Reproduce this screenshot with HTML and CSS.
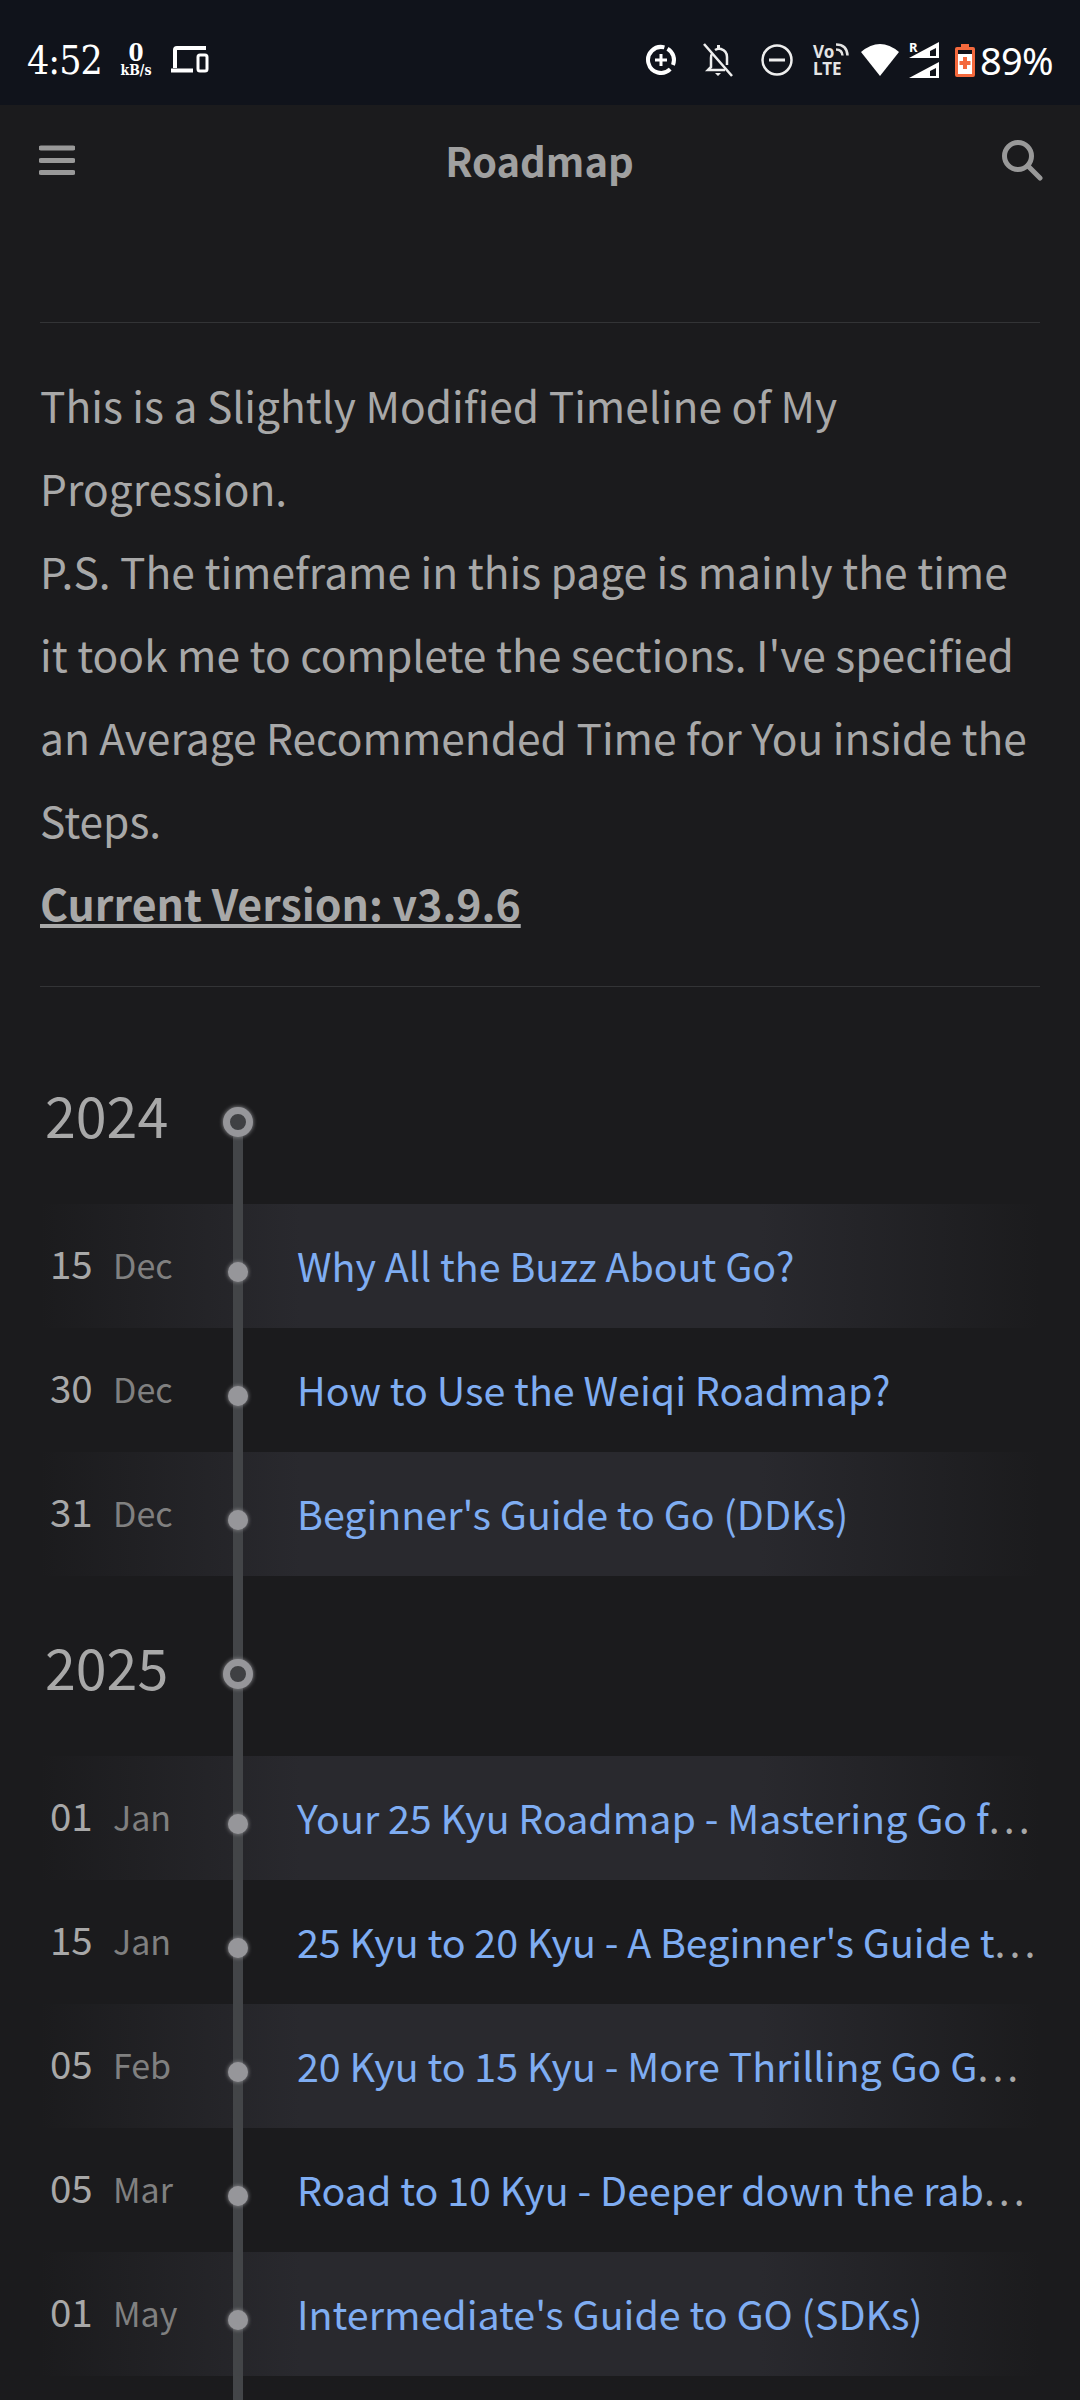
FILE: index.html
```html
<!DOCTYPE html>
<html lang="en">
<head>
  <meta charset="UTF-8">
  <title>Roadmap</title>
  <link rel="stylesheet" href="styles.css">
</head>
<body>

  <div class="status-bar">
    <div class="status-left">
      <span class="clock">4:52</span>
      <span class="speed"><b>0</b><small>kB/s</small></span>
      <svg class="ic-devices" width="38" height="30" viewBox="0 0 38 30">
        <path d="M4 23V5q0-2 2-2h29M0 25.500h22" fill="none" stroke="#fff" stroke-width="4"/>
        <rect x="27" y="10" width="9" height="16" rx="2" fill="none" stroke="#fff" stroke-width="3"/>
      </svg>
    </div>
    <div class="status-right">
      <svg width="32" height="32" viewBox="0 0 32 32">
        <path d="M19.400 3.400A13 13 0 1 0 25.200 25.200" fill="none" stroke="#fff" stroke-width="4"/>
        <path d="M22.500 4.700A13 13 0 0 1 28 20.900" fill="none" stroke="#fff" stroke-width="4"/>
        <path d="M16 10v12M10 16h12" stroke="#fff" stroke-width="3"/>
      </svg>
      <svg class="ic-bell" width="32" height="34" viewBox="0 0 32 34">
        <path d="M10 11q-1 1-1 4v9l-3 3h17M13 7q3-2 6-1 6 2 6 8v8" fill="none" stroke="#eee" stroke-width="2.500"/>
        <path d="M13 30h6l-3 3zM15 2h3v3h-3z" fill="#eee"/>
        <path d="M2 1l28 32" stroke="#eee" stroke-width="2.500"/>
      </svg>
      <svg class="ic-dnd" width="32" height="32" viewBox="0 0 32 32">
        <circle cx="16" cy="16" r="14.500" fill="none" stroke="#eee" stroke-width="2.500"/>
        <path d="M8 16h16" stroke="#eee" stroke-width="3"/>
      </svg>
      <span class="volte">
        <span class="volte-top">Vo
          <svg width="14" height="13" viewBox="0 0 14 13">
            <path d="M1 1.500Q12 1.500 12.500 12.500M1 6.500Q7 6.500 7.500 12.500" fill="none" stroke="#e4e4e4" stroke-width="2.500"/>
          </svg>
        </span>
        <span>LTE</span>
      </span>
      <svg class="ic-wifi" width="38" height="32" viewBox="0 0 38 32">
        <path d="M0 8Q19-8 38 8L19 32z" fill="#fff"/>
      </svg>
      <span class="signal">
        <i class="signal-r">R</i>
        <svg width="30" height="36" viewBox="0 0 30 36">
          <path d="M0 16L30 0v16zM0 36l30-16v16z" fill="#fff"/>
          <path d="M21 9l6-3v8h-6zM21 29l6-3v8h-6z" fill="#10131b"/>
        </svg>
      </span>
      <svg class="ic-battery" width="20" height="33" viewBox="0 0 20 33">
        <path d="M6 0h8v3h4q2 0 2 2v26q0 2-2 2H2q-2 0-2-2V5q0-2 2-2h4z" fill="#f4693d"/>
        <rect x="3" y="7" width="14" height="23" fill="#fff"/>
        <rect x="3" y="6" width="14" height="4" fill="#10131b"/>
        <path d="M10 13v12M4.500 19h11" stroke="#f4693d" stroke-width="4"/>
      </svg>
      <span class="percent">89%</span>
    </div>
  </div>

  <header class="app-bar">
    <svg width="36" height="30" viewBox="0 0 36 30">
      <path d="M2 3h32M2 15.500h32M2 27.500h32" stroke="#999" stroke-width="5" stroke-linecap="round"/>
    </svg>
    <h1>Roadmap</h1>
    <svg width="42" height="42" viewBox="0 0 42 42">
      <circle cx="17" cy="17" r="13.500" fill="none" stroke="#999" stroke-width="5"/>
      <path d="M27 27l12 12" stroke="#999" stroke-width="5" stroke-linecap="round"/>
    </svg>
  </header>

  <main class="content">
    <section class="intro">
      This is a Slightly Modified Timeline of My Progression.<br>
      P.S. The timeframe in this page is mainly the time it took me to complete the sections. I've specified an Average Recommended Time for You inside the Steps.<br>
      <strong>Current Version: v3.9.6</strong>
    </section>

    <section class="timeline">
      <div class="year"><span class="year-num">2024</span><i class="year-dot"></i></div>
      <div class="row striped">
        <span class="date"><b>15</b><em>Dec</em></span><i class="dot"></i>
        <a class="link">Why All the Buzz About Go?</a>
      </div>
      <div class="row">
        <span class="date"><b>30</b><em>Dec</em></span><i class="dot"></i>
        <a class="link">How to Use the Weiqi Roadmap?</a>
      </div>
      <div class="row striped">
        <span class="date"><b>31</b><em>Dec</em></span><i class="dot"></i>
        <a class="link">Beginner's Guide to Go (DDKs)</a>
      </div>

      <div class="year"><span class="year-num">2025</span><i class="year-dot"></i></div>
      <div class="row striped">
        <span class="date"><b>01</b><em>Jan</em></span><i class="dot"></i>
        <a class="link">Your 25 Kyu Roadmap - Mastering Go f<span class="more">...</span></a>
      </div>
      <div class="row">
        <span class="date"><b>15</b><em>Jan</em></span><i class="dot"></i>
        <a class="link">25 Kyu to 20 Kyu - A Beginner's Guide t<span class="more">...</span></a>
      </div>
      <div class="row striped">
        <span class="date"><b>05</b><em>Feb</em></span><i class="dot"></i>
        <a class="link">20 Kyu to 15 Kyu - More Thrilling Go G<span class="more">...</span></a>
      </div>
      <div class="row">
        <span class="date"><b>05</b><em>Mar</em></span><i class="dot"></i>
        <a class="link">Road to 10 Kyu - Deeper down the rab<span class="more">...</span></a>
      </div>
      <div class="row striped">
        <span class="date"><b>01</b><em>May</em></span><i class="dot"></i>
        <a class="link">Intermediate's Guide to GO (SDKs)</a>
      </div>
    </section>
  </main>

</body>
</html>
```

FILE: styles.css
```css
* {
  box-sizing: border-box;
}

html, body {
  height: 2400px;
  overflow: hidden;
}

body {
  margin: 0;
  background: #1b1b1d;
  color: #a8a8a8;
  font-family: "Noto Sans CJK SC", "Noto Sans", sans-serif;
}

/* status bar */
.status-bar {
  height: 105px;
  background: #10131b;
  color: #fff;
  display: flex;
  justify-content: space-between;
  align-items: center;
  padding: 15px 27px 0;
}

.status-left, .status-right {
  display: flex;
  align-items: center;
}

.clock {
  font-family: "DejaVu Serif", serif;
  font-size: 39px;
  font-stretch: condensed;
  letter-spacing: -1px;
  width: 91px;
}

.speed {
  display: flex;
  flex-direction: column;
  align-items: center;
  width: 36px;
  font-family: "DejaVu Serif", serif;
}

.speed b {
  font-size: 24px;
  line-height: 20px;
  font-stretch: condensed;
}

.speed small {
  font-size: 14px;
  line-height: 14px;
  font-weight: bold;
  font-stretch: condensed;
}

.ic-devices {
  margin-left: 17px;
}

.status-right svg {
  flex: none;
}

.ic-bell {
  margin-left: 25px;
}

.ic-dnd {
  margin-left: 26.500px;
}

.volte {
  display: flex;
  flex-direction: column;
  width: 36px;
  margin-left: 20.500px;
  font-family: "Noto Sans", sans-serif;
  font-size: 17px;
  font-weight: bold;
  line-height: 17px;
  color: #e4e4e4;
}

.volte-top {
  display: flex;
  align-items: flex-start;
  gap: 1px;
}

.ic-wifi {
  margin-left: 12px;
}

.signal {
  position: relative;
  margin-left: 10px;
  height: 36px;
}

.signal-r {
  position: absolute;
  left: 0;
  top: -4px;
  font-family: "Noto Sans", sans-serif;
  font-size: 13px;
  font-style: normal;
  font-weight: bold;
}

.ic-battery {
  margin-left: 16px;
}

.percent {
  font-family: "Noto Sans", sans-serif;
  font-size: 38px;
  margin-left: 5px;
  letter-spacing: -0.700px;
}

/* app bar */
.app-bar {
  height: 110px;
  display: flex;
  justify-content: space-between;
  align-items: center;
  padding: 0 37px 0 39px;
}

.app-bar h1 {
  margin: 0;
  padding-left: 3px;
  font-size: 40px;
  font-weight: 700;
  color: #a0a0a0;
}

.content {
  padding: 107px 40px 0;
}

.intro {
  border-top: 1px solid #333436;
  border-bottom: 1px solid #333436;
  padding: 40px 0 42px;
  font-size: 42.500px;
  line-height: 83px;
}

.intro strong {
  font-size: 42.800px;
  text-decoration: underline;
}

/* timeline */
.timeline {
  position: relative;
  height: 1500px;
  padding-top: 37px;
}

.timeline::before {
  content: "";
  position: absolute;
  left: 193px;
  top: 135px;
  bottom: 0;
  width: 10px;
  background: #434548;
}

.year {
  height: 180px;
  display: flex;
  align-items: flex-start;
}

.year-num {
  width: 183px;
  margin-top: 50px;
  padding-left: 5px;
  font-size: 55.500px;
  line-height: 80px;
}

.year-dot {
  position: relative;
  width: 30px;
  height: 30px;
  margin-top: 83px;
  border: 7px solid #96969a;
  border-radius: 50%;
  background: #3f4043;
  box-shadow: 0 0 4px #96969a;
}

.row {
  height: 124px;
  display: flex;
  align-items: center;
}

.striped {
  background: linear-gradient(to right, rgba(41, 41, 46, 0), #29292e 26%, #29292e 72%, rgba(41, 41, 46, 0));
}

.date {
  width: 183px;
  padding: 0 0 8px 10px;
  display: flex;
  align-items: baseline;
}

.date b {
  width: 63px;
  font-size: 38.500px;
  font-weight: 400;
  color: #a8a8a8;
}

.date em {
  font-size: 34px;
  font-style: normal;
  color: #808080;
}

.dot {
  position: relative;
  width: 20px;
  height: 20px;
  margin: 12px 5px 0;
  border-radius: 50%;
  background: #96969a;
  box-shadow: 0 0 4px #96969a;
}

.link {
  flex: 1;
  min-width: 0;
  margin-left: 44px;
  padding-bottom: 3px;
  font-size: 39.400px;
  color: #7fadf2;
  white-space: nowrap;
}

.more {
  color: #a8a8a8;
  letter-spacing: 4px;
}
```
